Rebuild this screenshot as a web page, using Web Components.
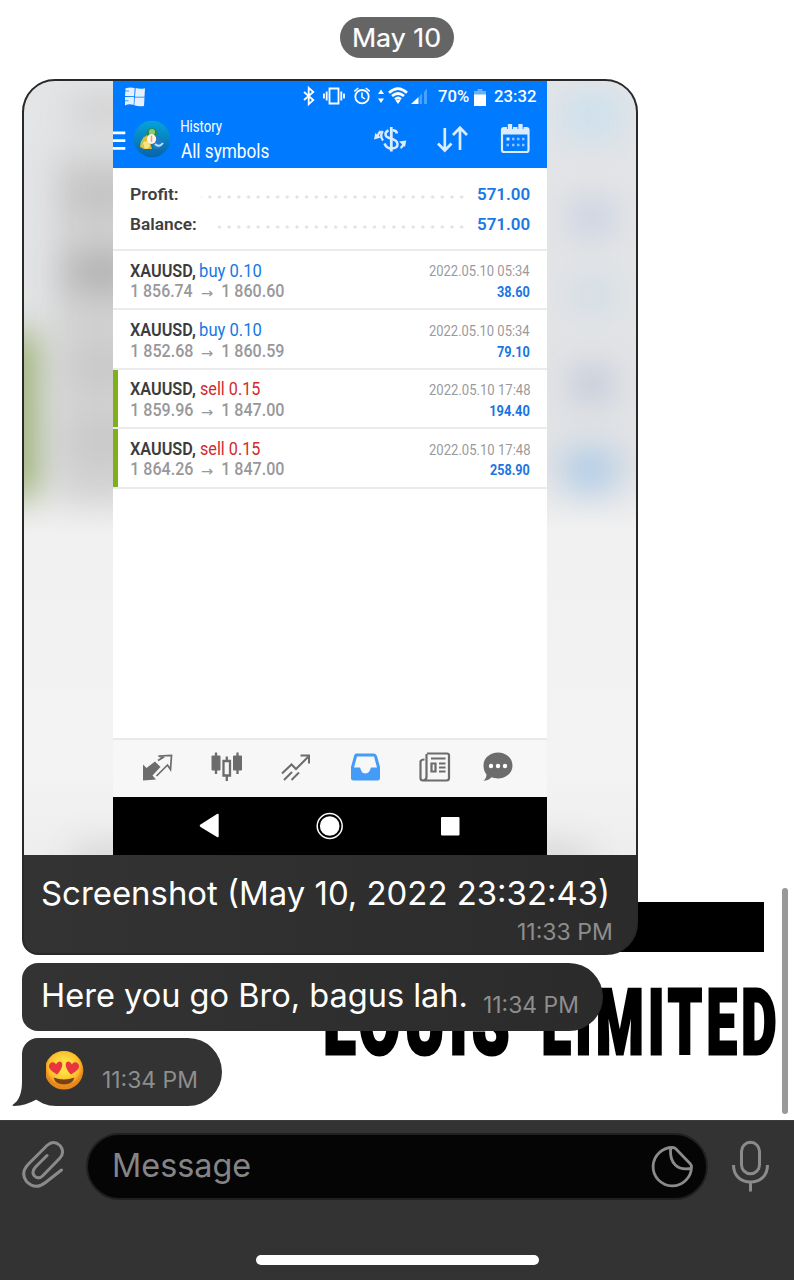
<!DOCTYPE html>
<html lang="en">
<head>
<meta charset="utf-8">
<title>Chat</title>
<style>
html,body{margin:0;padding:0;background:#fff}
</style>
</head>
<body>
<chat-app></chat-app>
<script>
const define = (name, html, after) => {
  const t = document.createElement('template');
  t.innerHTML = html;
  customElements.define(name, class extends HTMLElement {
    constructor() {
      super();
      this.attachShadow({mode: 'open'}).append(t.content.cloneNode(true));
    }
    connectedCallback() { if (after) after.call(this, this.shadowRoot); }
  });
};

/* Text whose ink is condensed or widened to a given width. */
const ctx = document.createElement('canvas').getContext('2d');
define('fit-text', `<style>:host{display:block;flex:none;white-space:pre}span{display:inline-block;transform-origin:0 0;line-height:inherit;vertical-align:top}</style><span></span>`, function (root) {
  const span = root.querySelector('span');
  const w = +this.getAttribute('w'), size = +this.getAttribute('size');
  span.textContent = this.getAttribute('text');
  this.style.width = w + 'px';
  this.style.height = this.style.lineHeight = this.style.fontSize = size + 'px';
  const cs = getComputedStyle(this);
  ctx.font = `${cs.fontWeight} ${size}px ${cs.fontFamily}`;
  ctx.letterSpacing = cs.letterSpacing === 'normal' ? '0px' : cs.letterSpacing;
  const m = ctx.measureText(span.textContent);
  const k = w / (m.actualBoundingBoxRight + m.actualBoundingBoxLeft);
  span.style.transform = `translateX(${m.actualBoundingBoxLeft * k}px) scaleX(${k})`;
});

define('date-pill', `<style>
:host{display:flex;align-items:center;justify-content:center;box-sizing:border-box;width:114px;height:41px;padding-top:1px;border-radius:21px;background:#656565;color:#fff;font-weight:400;-webkit-text-stroke:.2px #fff;margin:17px auto 0;position:relative}
</style><fit-text text="May 10" size="25.500" w="86"></fit-text>`);

define('status-bar', `<style>
:host{display:flex;align-items:center;height:32px;color:#fff;font-weight:500;padding:0 10px 0 12px}
svg{display:block;flex:none}.s{margin-left:158px}.p{margin-left:10px}.b{margin:0 8px 1px 5px}
</style>
<svg width="20" height="20" viewBox="0 0 20 20" fill="#e4f0ff" style="margin-bottom:1px"><path d="M.500 1.300Q5 0 9.700 1L9.200 9.200 0 9ZM10.700 1Q15 2.500 20 1.300L19.500 9.700H10ZM0 10H9L8.700 18Q4 16.500 0 18.500ZM9.800 10.500H19.500L19 19Q14 20 9.300 18.200Z"/><path d="M0 4H4M0 13.800H3.500" stroke="#007aff" stroke-width=".7"/></svg>
<svg class="s" width="125" height="32" viewBox="303 81 125 32" fill="none" stroke="#fff" stroke-width="1.800">
<path d="M304 92 313.300 100 308.700 104.300V87.700L313.300 92 304 100"/>
<path d="M329.500 88.500H338.500V103.500H329.500ZM326.700 91.500V100.500M324 93.500V98.500M341.300 91.500V100.500M344 93.500V98.500"/>
<circle cx="362" cy="96.700" r="6.700"/><path d="M362 92.500V97L365 99M354.300 91.300 358.300 88M369.700 91.300 365.700 88" stroke-width="1.500"/>
<path d="M381 89.500 384 94H378ZM381 103 384 98.500H378Z" fill="#fff" stroke="none"/>
<path d="M389 92.700Q398 84.500 407 92.700M392 96Q398 91 404 96M395 99.200Q398 96.700 401 99.200" stroke-width="2.700"/><path d="M398 104 395.500 100.600Q398 99 400.500 100.600Z" fill="#fff" stroke="none"/>
<path d="M411 104 418.500 97V104Z" fill="#fff" stroke="none"/><path d="M419.500 96 422 93.500V104H419.500ZM424 92 427 88.500V104H424Z" fill="#4ca1ff" stroke="none"/>
</svg>
<fit-text class="p" text="70%" size="16.500" w="31"></fit-text>
<svg class="b" width="12" height="18" viewBox="0 0 12 18"><path fill="#66b0ff" d="M3.500 1H8.500V3H12V7H0V3H3.500Z"/><path fill="#fff" d="M0 6.500H12V18H0Z"/></svg>
<fit-text text="23:32" size="16.500" w="42"></fit-text>`);

define('app-bar', `<style>
:host{display:flex;height:55px;color:#fff}
svg{display:block;flex:none}.t{width:88px;margin:6px 104px 0 11px;flex:none}.a{margin-top:6px}.c{opacity:.86}
</style>
<svg width="57" height="55" viewBox="113 113 57 55">
<path d="M113 132.800H125.300M113 140.700H125.300M113 148.400H125.300" stroke="#fff" stroke-width="2.800"/>
<defs><linearGradient id="g" x1="0" y1="0" x2="0" y2="1"><stop offset="0" stop-color="#06a3dc"/><stop offset="1" stop-color="#0863a9"/></linearGradient></defs>
<circle cx="152" cy="139" r="18.300" fill="url(#g)"/>
<path d="M146 134Q147 128 152 128 157 128 158 134L155 141H148Z" fill="#278c50"/><circle cx="152" cy="132" r="3" fill="#8ccb76"/>
<path d="M140 147Q140 139 147 135L150 142 152 149H144Z" fill="#e6b830"/><circle cx="146" cy="145" r="3.700" fill="#f9e57c"/><path d="M144 137Q141 143 144 148" stroke="#9ac77a" fill="none"/>
<path d="M156 135Q162 139 163 145 161 149 154 149L152 143Z" fill="#2679c4"/><path d="M155 144Q159 148 163 143" stroke="#b4e5f8" stroke-width="2" fill="none"/>
<ellipse cx="151.500" cy="139" rx="4.600" ry="5" fill="#fff5e8"/><path d="M151.500 135.500V142" stroke="#e3a575" stroke-width="1.500"/>
</svg>
<div class="t"><fit-text text="History" size="15.800" w="41.500"></fit-text><fit-text class="a" text="All symbols" size="20" w="88"></fit-text></div>
<svg class="c" width="160" height="55" viewBox="373 113 160 55" fill="none" stroke="#fff">
<path d="M391.300 127V151.500" stroke-width="2.800"/><path d="M397 133.500Q396.500 130.300 392.500 130.300M388.500 130.500Q385.500 131.500 385.500 134.300C385.500 137.500 389 138 391.500 138.700 395 139.700 397.500 141 397.500 144.300 397.500 147.300 395 148.500 391.500 148.500Q386.500 148.500 384.500 143.500" stroke-width="2.500"/><path d="M382.800 131Q379.500 135.500 383 140.500M377.500 137Q378 133.500 380.500 131M403.700 142Q403.500 146.500 400.500 148" stroke-width="2.300"/>
<path d="M374 139.500 375.300 133 381 137.500ZM406.300 140.500 405 147 399 141.500Z" fill="#fff" stroke="none"/>
<path d="M444.800 128V150M438 143.500 444.800 150.500 451.500 143.500M460 150V128.500M453 135 460 127.800 467 135" stroke-width="2.700"/>
<path d="M504 128H526.500Q528.500 128 528.500 130V150Q528.500 152 526.500 152H504Q502 152 502 150V130Q502 128 504 128Z" stroke-width="2.200"/>
<path d="M502 128H528.500V134.500H502Z" fill="#fff" stroke="none"/><path d="M510 124.500V129M520.500 124.500V129" stroke="#007aff" stroke-width="6"/><path d="M510 124V129M520.500 124V129" stroke-width="4.300"/>
<path d="M506.500 139H509.500" stroke-width="3"/><path d="M512 139H514.500M517 139H519.500M522 139H524.500M506.500 145H509M512 145H514.500M517 145H519.500M522 145H524.500" stroke-width="2.600" opacity=".65"/>
</svg>`);

define('sum-row', `<style>
:host{display:flex;height:17px;color:#3e3e40;font-weight:600}
.d{flex:1;height:4px;margin:9.500px 11px 0 0;background:radial-gradient(circle at 50% 50%,#e0e0e4 1.200px,transparent 1.900px) right top/9.700px 4px repeat-x}
.v{color:#1a78e6}
</style><fit-text class="l" size="17"></fit-text><div class="d"></div><fit-text class="v" size="17" text="571.00" w="52.500"></fit-text>`, function (r) {
  const l = r.querySelector('.l');
  l.setAttribute('text', this.getAttribute('label'));
  l.setAttribute('w', this.getAttribute('w'));
  r.querySelector('.d').style.marginLeft = this.getAttribute('gap') + 'px';
  l.connectedCallback();
});

customElements.define('trade-row', class extends HTMLElement {
  constructor() { super(); this.attachShadow({mode: 'open'}); }
  connectedCallback() {
    const a = n => this.getAttribute(n), sell = a('side') === 'sell';
    this.shadowRoot.innerHTML = `<style>
:host{display:flex;justify-content:space-between;box-sizing:border-box;height:59.400px;border-bottom:2px solid #ebebed;padding:0 17px 0 17px;box-shadow:inset 5px 0 ${sell ? '#7fb019' : '#fff'}}
.l{margin-top:10.500px}.r{margin-top:13.400px;display:flex;flex-direction:column;align-items:flex-end}
.x{display:flex}.n{color:#3c3c3e;font-weight:600;margin-right:4.700px}.a{color:${sell ? '#d3292d' : '#1878e4'}}
.p{color:#98989b;font-weight:500;margin-top:2.200px;padding-left:1px}.w{font-family:"DejaVu Sans",sans-serif;margin:4px 8px 0}.t{color:#9a9a9d}.v{color:#1a75e2;font-weight:700;margin-top:5.500px}
</style><div class="l"><div class="x"><fit-text class="n" text="XAUUSD," size="18.500" w="65.500"></fit-text><fit-text class="a" text="${a('side')} ${a('lot')}" size="18.500" w="${sell ? 60 : 61.5}"></fit-text></div>
<div class="x p"><fit-text text="${a('from')}" size="18.500" w="62"></fit-text><fit-text class="w" text="→" size="14" w="12.500"></fit-text><fit-text text="${a('to')}" size="18.500" w="62"></fit-text></div></div>
<div class="r"><fit-text class="t" text="${a('time')}" size="15.300" w="101"></fit-text><fit-text class="v" text="${a('profit')}" size="15.300" w="${a('profit').length > 5 ? 40 : 33}"></fit-text></div>`;
  }
});

define('tab-bar', `<style>:host{display:block;height:57px;border-top:2px solid #e9e9ea;background:#f7f7f7}svg{display:block}</style>
<svg width="434" height="57" viewBox="113 740 434 57" fill="none" stroke="#6c6c6d" stroke-width="2">
<path d="M143 764.500 146.500 768 155 761.500 160.500 767 152.500 775.500 156 779.500 143 780.500Z" fill="#6c6c6d" stroke="none"/><path d="M158 760.500 163 757.500 158.500 756 171.500 755.500 170.500 769.500 167.500 765 156.500 776" stroke-width="1.700"/>
<path d="M212 756H220V770H212ZM233.500 756H241.500V770H233.500Z" fill="#6c6c6d" stroke="#6c6c6d" stroke-width="1" stroke-linejoin="round"/><path d="M216 752.500V774M237.500 752.500V774M226.800 756.500V761M226.800 776V781" stroke-width="2.300"/><path d="M223.500 761H230V775.500H223.500Z" stroke-width="2.300"/>
<path d="M282 773.500 291.500 764.500 296 769 308 757M300.500 755.500H309V763.500M284 780 292 772M291.500 780 299 772.500"/>
<path fill="#449bf8" stroke="none" fill-rule="evenodd" d="M356 753.500H374Q376 753.500 377 756L380 767V778Q380 780.500 377.500 780.500H353.500Q351 780.500 351 778V767L354 756Q354.500 753.500 356 753.500ZM357 756.500 354 767.500H359.500C360.500 767.500 360.500 769 361 770Q362 773.500 365.500 773.500 369 773.500 370 770C370.500 769 370.500 767.500 371.500 767.500H377L374 756.500Z"/>
<path d="M427 753.500H447Q449 753.500 449 755.500V778Q449 780.500 446.500 780.500H423Q420.500 780.500 420.500 778V762Q420.500 759.500 424.500 759.500M426.500 754V777Q426.500 780 423.500 780M431 758.500H445.500M431.500 763.500H435.500V771.500H431.500ZM439 763.500H445.500M439 767.500H445.500M439 771.500H445.500" stroke-width="2.200"/>
<path fill="#6c6c6d" stroke="none" d="M498 752.500C506 752.500 512.500 758 512.500 765.500 512.500 773 506 778.500 498 778.500 495.500 778.500 493.500 778 491.500 777.300 489 780 486 780.500 483.500 781 485.500 779 486.500 777 486.500 774.500 484.500 772 483.500 769 483.500 765.500 483.500 758 490 752.500 498 752.500Z"/><g fill="#fff" stroke="none"><circle cx="491" cy="766" r="2.200"/><circle cx="498" cy="766" r="2.200"/><circle cx="505" cy="766" r="2.200"/></g>
</svg>`);

define('nav-bar', `<style>:host{display:block;height:58px;background:#000}svg{display:block}</style>
<svg width="434" height="58" viewBox="113 797 434 58" fill="#fff">
<path d="M218.700 815V836Q218.700 838 217 837L200.500 827Q198.700 825.800 200.500 824.500L217 814Q218.700 813 218.700 815Z"/><circle cx="329.700" cy="826" r="9.800"/><circle cx="329.700" cy="826" r="12.500" fill="none" stroke="#fff" stroke-width="1.500"/><rect x="441" y="817" width="18.500" height="18.500" rx="1"/></svg>`);

define('phone-screen', `<style>
:host{display:flex;flex-direction:column;width:434px;height:774px;margin:0 auto;background:#fff;font-family:Roboto,sans-serif;position:relative}
.top{background:#007aff}.sum{height:83px;box-sizing:border-box;border-bottom:2px solid #ebebed;padding:17.700px 17.500px 0;display:flex;flex-direction:column;gap:13px}.f{flex:1}
</style>
<div class="top"><status-bar></status-bar><app-bar></app-bar></div>
<div class="sum"><sum-row label="Profit:" w="47" gap="23"></sum-row><sum-row label="Balance:" w="65" gap="22"></sum-row></div>
<trade-row side="buy" lot="0.10" from="1 856.74" to="1 860.60" time="2022.05.10 05:34" profit="38.60"></trade-row>
<trade-row side="buy" lot="0.10" from="1 852.68" to="1 860.59" time="2022.05.10 05:34" profit="79.10"></trade-row>
<trade-row side="sell" lot="0.15" from="1 859.96" to="1 847.00" time="2022.05.10 17:48" profit="194.40"></trade-row>
<trade-row side="sell" lot="0.15" from="1 864.26" to="1 847.00" time="2022.05.10 17:48" profit="258.90"></trade-row>
<div class="f"></div><tab-bar></tab-bar><nav-bar></nav-bar>`);

define('photo-message', `<style>
:host{display:block;box-sizing:border-box;width:616px;height:876px;border:2px solid #29292a;border-radius:33px 33px 32px 16px;overflow:hidden;background:linear-gradient(90deg,#333,#2b2b2b);color:#fff}
.pic{height:774px;position:relative;overflow:hidden;background:linear-gradient(#e4e5e7 0,#e2e3e5 385px,#f1f1f1 450px,#f3f3f3 690px,#eee 774px)}
.blur{position:absolute;inset:0;filter:blur(17px)}
.blur i{position:absolute;display:block}
phone-screen{z-index:1}
.c{margin:21.700px 0 0 18px}.t{margin:11px 25px 0 auto;color:#8e8e8e}
</style><div class="pic"><div class="blur">
<i style="left:45px;top:15px;width:80px;height:30px;background:#cfcfcf"></i>
<i style="left:32px;top:70px;width:90px;height:350px;background:#d0d0d0"></i>
<i style="left:40px;top:98px;width:80px;height:30px;background:#c0c0c0"></i>
<i style="left:40px;top:172px;width:80px;height:38px;background:#b2b2b2"></i>
<i style="left:40px;top:275px;width:80px;height:20px;background:#c4c4c4"></i>
<i style="left:40px;top:350px;width:80px;height:20px;background:#c4c4c4"></i>
<i style="left:-20px;top:252px;width:29px;height:165px;background:#89a356"></i>
<i style="left:535px;top:10px;width:65px;height:50px;background:#cde0ec"></i>
<i style="left:548px;top:118px;width:40px;height:36px;background:#c6cee0"></i>
<i style="left:548px;top:200px;width:40px;height:28px;background:#cadbe5"></i>
<i style="left:548px;top:286px;width:40px;height:34px;background:#bdc6d9"></i>
<i style="left:540px;top:368px;width:52px;height:42px;background:#aecbe7"></i>
<i style="left:50px;top:765px;width:515px;height:30px;background:#d2d2d2"></i>
</div><phone-screen></phone-screen></div>
<fit-text class="c" text="Screenshot (May 10, 2022 23:32:43)" size="33" w="565"></fit-text>
<fit-text class="t" text="11:33 PM" size="22.500" w="93.500"></fit-text>`);

define('text-message', `<style>
:host{display:flex;box-sizing:border-box;width:581px;height:67.500px;border-radius:16px 34px 34px 16px;background:linear-gradient(90deg,#333,#2b2b2b);color:#fff;padding:15.500px 0 0 21px;margin-top:8px}
.t{color:#8e8e8e;margin:15.500px 0 0 18.500px}
</style><fit-text text="Here you go Bro, bagus lah." size="33" w="422.500"></fit-text><fit-text class="t" text="11:34 PM" size="22.500" w="93.500"></fit-text>`);

define('emoji-message', `<style>
:host{display:flex;width:200px;height:67.500px;border-radius:16px 34px 34px 34px;background:#333;margin-top:7.500px;position:relative}
.tail{position:absolute;left:-10px;bottom:0}.e{margin:12px 0 0 21px}.t{color:#8e8e8e;margin:31px 0 0 18.500px}svg{display:block;flex:none}
</style>
<svg class="tail" width="34" height="44" viewBox="0 -4 34 44"><path fill="#333" d="M10-4V16C10 27 7 35 .800 38.700Q-.500 40 2.500 40 13.500 39.500 24.500 33.500L34 20V-4Z"/></svg>
<svg class="e" width="41" height="41" viewBox="0 0 41 41"><defs><radialGradient id="f" cy=".4"><stop offset=".35" stop-color="#ffdf43"/><stop offset=".8" stop-color="#fcbd2b"/><stop offset="1" stop-color="#e8881c"/></radialGradient></defs>
<circle cx="21" cy="20.300" r="19.300" fill="url(#f)"/><path fill="#e9353f" d="M14 24.500C6 20 4.500 16.500 7 13.500 9 11.500 12 12 13 14.500 15 10.500 19 10.500 19.300 14.500 19.300 18 16.500 22 14 24.500Z"/><path fill="#e9353f" d="M28 24.500C36 20 37.500 16.500 35 13.500 33 11.500 30 12 29 14.500 27 10.500 23 10.500 22.700 14.500 22.700 18 25.500 22 28 24.500Z"/><path fill="#794018" d="M10.500 27.500Q21 31.500 31.500 27.500 29.500 34.500 21 34.500 12.500 34.500 10.500 27.500Z"/></svg>
<fit-text class="t" text="11:34 PM" size="22.500" w="93.500"></fit-text>`);

define('wall-paper', `<style>
:host{position:absolute;right:0;top:901.500px;width:469px;height:160px;display:flex;flex-direction:column;color:#000;font-family:Roboto,sans-serif;font-weight:900}
.b{height:50.500px;width:260.500px;margin-left:178px;background:#000;flex:none}.w{display:flex;margin:26.500px 0 0 1px;letter-spacing:7px;-webkit-text-stroke:3px #000;gap:36px}
</style><div class="b"></div><div class="w"><fit-text text="LOUIS" size="90" w="182"></fit-text><fit-text text="LIMITED" size="90" w="231"></fit-text></div>`);

define('message-composer', `<style>
:host{display:block;height:160px;background:#333;border-top:1px solid #3c3c3c;box-sizing:border-box}
.r{display:flex;align-items:flex-start;padding:11.500px 24px 0 22px}svg{display:block;flex:none}
.f{display:flex;align-items:center;box-sizing:border-box;width:622px;height:67px;border:2px solid #202020;border-radius:34px;background:#050505;color:#858587;margin:0 23px 0 21px;padding:0 11.500px 1px 26px;justify-content:space-between;flex:none}
.h{width:283px;height:10px;border-radius:5px;background:#fff;margin:55.500px 0 0 256px}
</style><div class="r"><svg width="43" height="50" viewBox="22 1141 43 50" style="margin-top:7.500px" fill="none" stroke="#8b8b8b" stroke-width="3" stroke-linecap="round"><path d="M47 1156.500 35.500 1168Q31 1173 34.500 1177 38.500 1181 43 1176.500L59.500 1159.500Q65.500 1153 60 1146.500 53.500 1140.500 47 1146.500L28.500 1165Q20 1174 26.500 1182.500 35.500 1191.500 45.500 1183.500L61.500 1171"/></svg>
<div class="f"><fit-text text="Message" size="33" w="136"></fit-text><svg width="44" height="44" viewBox="650 1143 44 44" fill="none" stroke="#8b8b8b" stroke-width="2.800" stroke-linejoin="round"><path d="M672 1146.500A19.200 19.200 0 1 0 690.500 1166Q690.500 1164 689 1162.500L675 1148Q673.500 1146.500 672 1146.500Q669.500 1146.500 669.500 1149C669 1162 676 1170 690 1167.500"/></svg></div>
<svg width="38" height="52" viewBox="731 1140 38 52" style="margin-top:7px" fill="none" stroke="#8b8b8b" stroke-width="3"><rect x="741.500" y="1142.300" width="18" height="31.500" rx="9"/><path d="M733.500 1165C733.500 1176 741 1182 750.500 1182S767.500 1176 767.500 1165M750.500 1182V1191.500"/></svg></div><div class="h"></div>`);

define('chat-app', `<style>
:host{display:flex;flex-direction:column;width:794px;height:1280px;overflow:hidden;position:relative;background:#fff;font-family:Inter,sans-serif}
.m{height:1120px;box-sizing:border-box;position:relative;flex:none}.l{position:relative;margin:21px 0 0 22px}
.s{position:absolute;left:782px;top:888px;width:6px;height:226px;border-radius:3px;background:#999}
</style><div class="m"><wall-paper></wall-paper><date-pill></date-pill><div class="l"><photo-message></photo-message><text-message></text-message><emoji-message></emoji-message></div><div class="s"></div></div><message-composer></message-composer>`);
</script>
</body>
</html>
